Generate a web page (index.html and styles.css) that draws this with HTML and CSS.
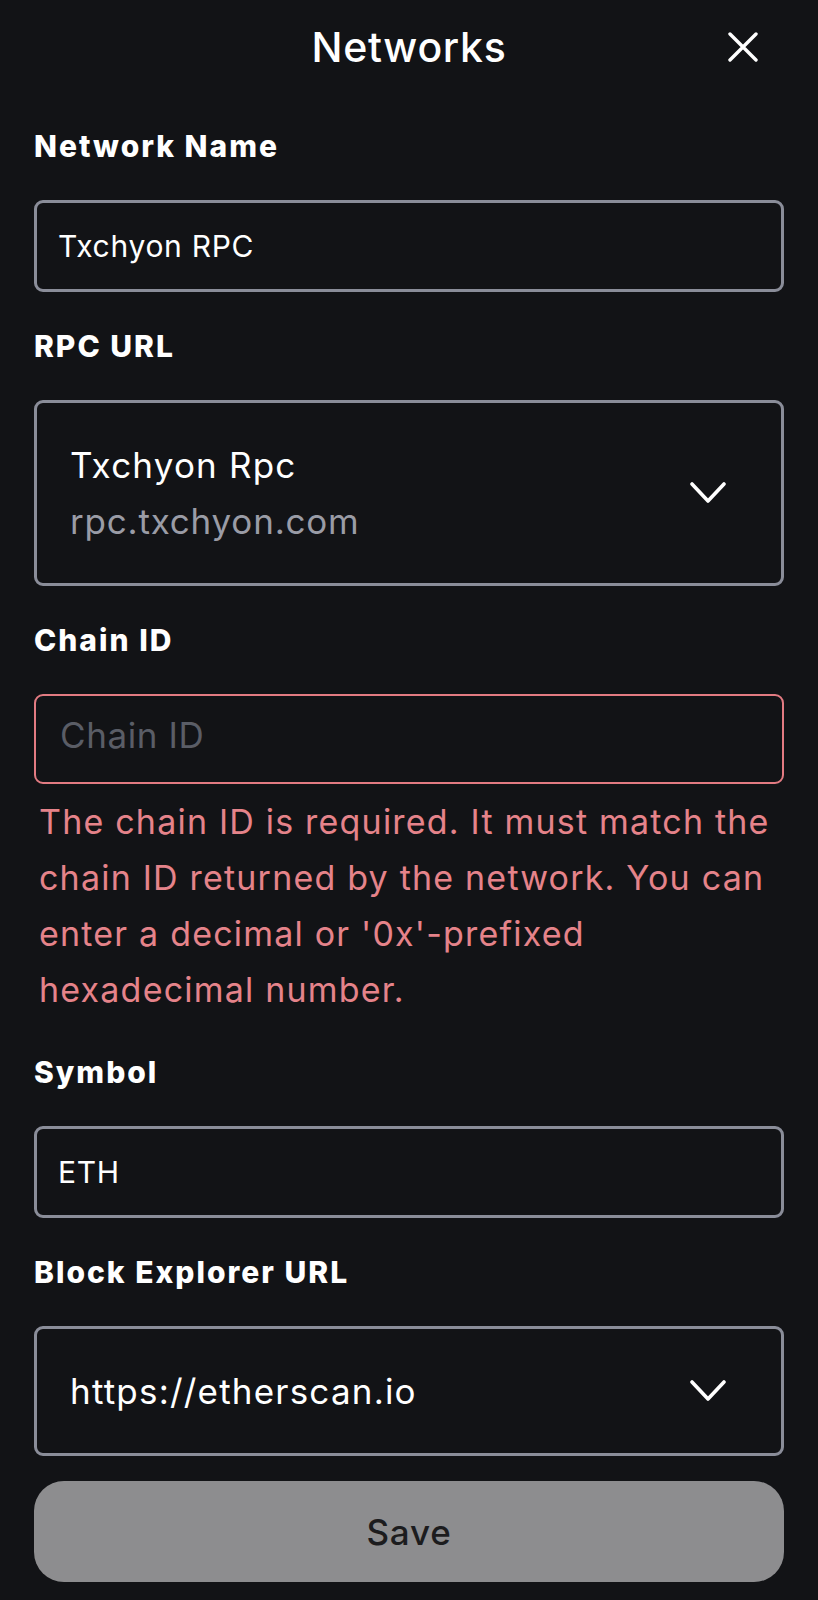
FILE: index.html
```html
<!DOCTYPE html>
<html lang="en">
<head>
<meta charset="utf-8">
<title>Networks</title>
<link rel="stylesheet" href="styles.css">
</head>
<body>
<div class="page">
  <header class="header">
    <span></span>
    <h1 class="title">Networks</h1>
    <button class="close" aria-label="Close">
      <svg width="30" height="30" viewBox="0 0 30 30"><path d="M2 2 L28 28 M28 2 L2 28" stroke="#fff" stroke-width="3.4" stroke-linecap="round" fill="none"/></svg>
    </button>
  </header>

  <form class="form">
    <div class="field">
      <label class="label">Network Name</label>
      <div class="input">Txchyon RPC</div>
    </div>

    <div class="field">
      <label class="label">RPC URL</label>
      <div class="input select tall">
        <div class="select-text">
          <div class="primary">Txchyon Rpc</div>
          <div class="secondary">rpc.txchyon.com</div>
        </div>
        <svg class="chev" width="36" height="22" viewBox="0 0 36 22"><polyline points="2,2 18,19 34,2" stroke="#fff" stroke-width="3.6" stroke-linecap="round" stroke-linejoin="round" fill="none"/></svg>
      </div>
    </div>

    <div class="field">
      <label class="label">Chain ID</label>
      <div class="input error"><span class="placeholder">Chain ID</span></div>
      <p class="error-text">The chain ID is required. It must match the chain ID returned by the network. You can enter a decimal or '0x'-prefixed hexadecimal number.</p>
    </div>

    <div class="field">
      <label class="label">Symbol</label>
      <div class="input">ETH</div>
    </div>

    <div class="field">
      <label class="label">Block Explorer URL</label>
      <div class="input select explorer">
        <div class="primary">https://etherscan.io</div>
        <svg class="chev" width="36" height="22" viewBox="0 0 36 22"><polyline points="2,2 18,19 34,2" stroke="#fff" stroke-width="3.6" stroke-linecap="round" stroke-linejoin="round" fill="none"/></svg>
      </div>
    </div>

    <button type="button" class="save">Save</button>
  </form>
</div>
</body>
</html>
```

FILE: styles.css
```css
html, body {
  margin: 0;
  padding: 0;
  background: #121316;
}
body {
  font-family: Inter, "Noto Sans", "Liberation Sans", sans-serif;
  color: #ffffff;
}
.page {
  width: 818px;
  box-sizing: border-box;
  padding: 22px 34px 0 34px;
}
.header {
  display: grid;
  grid-template-columns: 1fr auto 1fr;
  align-items: center;
  height: 50px;
  margin-bottom: 56px;
}
.title {
  margin: 0;
  font-size: 41px;
  line-height: 50px;
  font-weight: 500;
  letter-spacing: 0.7px;
}
.close {
  justify-self: end;
  margin-right: 26px;
  background: none;
  border: 0;
  padding: 0;
  width: 30px;
  height: 30px;
  display: flex;
}
.form {
  display: flex;
  flex-direction: column;
}
.field {
  display: flex;
  flex-direction: column;
  margin-bottom: 36px;
}
.label {
  font-size: 30px;
  line-height: 36px;
  font-weight: 800;
  letter-spacing: 2px;
  margin-bottom: 36px;
}
.input {
  box-sizing: border-box;
  height: 92px;
  border: 3px solid #8a8d99;
  border-radius: 9px;
  display: flex;
  align-items: center;
  padding: 0 21px;
  font-size: 30px;
  letter-spacing: 0.7px;
  color: #ffffff;
}
.select {
  justify-content: space-between;
  padding: 0 55px 0 33px;
}
.tall {
  height: 186px;
}
.explorer {
  height: 130px;
}
.primary {
  font-size: 35px;
  line-height: 56px;
  letter-spacing: 1.2px;
  color: #ffffff;
}
.secondary {
  font-size: 35px;
  line-height: 56px;
  letter-spacing: 0.8px;
  color: #9a9ca6;
}
.chev {
  display: block;
}
.input.error {
  height: 90px;
  border: 2px solid #e27b82;
  padding: 0 24px 8px 24px;
}
.placeholder {
  font-size: 35px;
  letter-spacing: 0.6px;
  color: #5a5d66;
}
.error-text {
  margin: 10px 0 0 0;
  padding-left: 5px;
  font-size: 34px;
  line-height: 56px;
  letter-spacing: 1.2px;
  color: #e5838a;
}
.save {
  height: 101px;
  margin-top: -11px;
  border: 0;
  border-radius: 30px;
  background: #8d8d8f;
  color: #1c1c1e;
  font-family: Inter, "Noto Sans", "Liberation Sans", sans-serif;
  font-size: 35px;
  font-weight: 500;
  letter-spacing: 0.8px;
}
```
